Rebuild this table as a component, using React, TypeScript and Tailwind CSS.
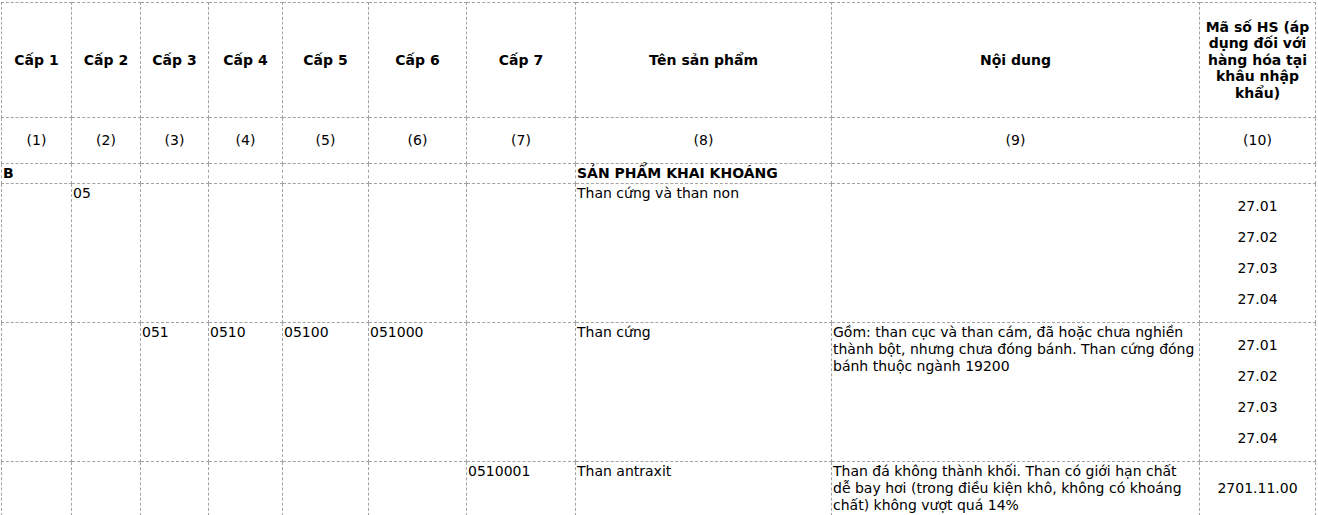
const headers = ['Cấp 1', 'Cấp 2', 'Cấp 3', 'Cấp 4', 'Cấp 5', 'Cấp 6', 'Cấp 7', 'Tên sản phẩm', 'Nội dung']

const widths = [
  'w-[70px]',
  'w-[69px]',
  'w-[68px]',
  'w-[74px]',
  'w-[86px]',
  'w-[98px]',
  'w-[109px]',
  'w-[256px]',
  'w-[368px]',
  'w-[116px]',
]

const cell = 'border border-dashed border-[#a3a3a3] p-px align-top'
const head = 'border border-dashed border-[#a3a3a3] px-[3px] text-center align-middle font-bold leading-[16.5px]'

function HsCodes({ codes }: { codes: string[] }) {
  return (
    <div className="flex flex-col items-center gap-[14px] py-[13px]">
      {codes.map((c) => (
        <p key={c}>{c}</p>
      ))}
    </div>
  )
}

export default function App() {
  return (
    <div className="min-h-screen bg-white pl-px pt-[2px] text-[14px] leading-[17px] text-black" style={{ fontFamily: '"DejaVu Sans", Verdana, sans-serif' }}>
      <table className="w-[1314px] table-fixed border-collapse border border-dashed border-[#a3a3a3]">
        <colgroup>
          {widths.map((w) => (
            <col key={w} className={w} />
          ))}
        </colgroup>
        <tbody>
          {/* Header */}
          <tr className="h-[115px]">
            {headers.map((h) => (
              <td key={h} className={head}>
                {h}
              </td>
            ))}
            <td className={head}>Mã số HS (áp dụng đối với hàng hóa tại khâu nhập khẩu)</td>
          </tr>

          {/* Column numbers */}
          <tr className="h-[46px]">
            {Array.from({ length: 10 }, (_, i) => (
              <td key={i} className="border border-dashed border-[#a3a3a3] text-center align-middle">
                ({i + 1})
              </td>
            ))}
          </tr>

          {/* Section B */}
          <tr className="h-[18px] font-bold">
            <td className={cell}>B</td>
            <td className={cell}></td>
            <td className={cell}></td>
            <td className={cell}></td>
            <td className={cell}></td>
            <td className={cell}></td>
            <td className={cell}></td>
            <td className={cell}>SẢN PHẨM KHAI KHOÁNG</td>
            <td className={cell}></td>
            <td className={cell}></td>
          </tr>

          <tr>
            <td className={cell}></td>
            <td className={cell}>05</td>
            <td className={cell}></td>
            <td className={cell}></td>
            <td className={cell}></td>
            <td className={cell}></td>
            <td className={cell}></td>
            <td className={cell}>Than cứng và than non</td>
            <td className={cell}></td>
            <td className={cell + ' text-center'}>
              <HsCodes codes={['27.01', '27.02', '27.03', '27.04']} />
            </td>
          </tr>

          <tr>
            <td className={cell}></td>
            <td className={cell}></td>
            <td className={cell}>051</td>
            <td className={cell}>0510</td>
            <td className={cell}>05100</td>
            <td className={cell}>051000</td>
            <td className={cell}></td>
            <td className={cell}>Than cứng</td>
            <td className={cell}>
              Gồm: than cục và than cám, đã hoặc chưa nghiền thành bột, nhưng chưa đóng bánh. Than cứng đóng bánh thuộc ngành 19200
            </td>
            <td className={cell + ' text-center'}>
              <HsCodes codes={['27.01', '27.02', '27.03', '27.04']} />
            </td>
          </tr>

          <tr>
            <td className={cell}></td>
            <td className={cell}></td>
            <td className={cell}></td>
            <td className={cell}></td>
            <td className={cell}></td>
            <td className={cell}></td>
            <td className={cell}>0510001</td>
            <td className={cell}>Than antraxit</td>
            <td className={cell}>
              Than đá không thành khối. Than có giới hạn chất dễ bay hơi (trong điều kiện khô, không có khoáng chất) không vượt quá 14%
            </td>
            <td className="border border-dashed border-[#a3a3a3] p-px text-center align-middle">2701.11.00</td>
          </tr>
        </tbody>
      </table>
    </div>
  )
}
